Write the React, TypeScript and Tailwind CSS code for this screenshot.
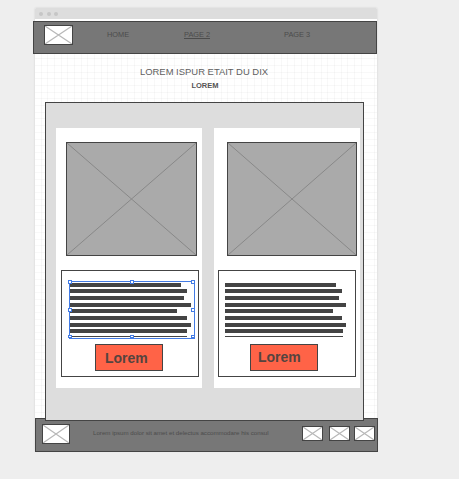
import React from 'react';

function Placeholder({ width, height, className = '', stroke = '#b8b8b8', strokeWidth = 1.2 }: {
  width: number; height: number; className?: string; stroke?: string; strokeWidth?: number;
}) {
  return (
    <div className={`shrink-0 border border-[#444] ${className}`} style={{ width, height }}>
      <svg className="block h-full w-full" viewBox={`0 0 ${width - 2} ${height - 2}`}>
        <path d={`M0 0L${width - 2} ${height - 2}M${width - 2} 0L0 ${height - 2}`} stroke={stroke} strokeWidth={strokeWidth} fill="none" />
      </svg>
    </div>
  );
}

const gaps = [0, 2, 3, 3, 2, 3, 3, 2, 3];

function TextLines({ widths }: { widths: number[] }) {
  return (
    <div className="flex flex-col">
      {widths.map((width, i) => (
        <div key={i} className="bg-[#444]" style={{ width, height: i === 8 ? 1 : 4, marginTop: gaps[i] }} />
      ))}
    </div>
  );
}

const handles = [
  [-1, -1, 4], [61, -1, 4], [122, -1, 4],
  [-1, 27, 4], [122, 27, 4],
  [-1, 54, 3], [61, 54, 3], [122, 54, 3],
];

function Selection() {
  return (
    <div className="absolute left-[7px] top-[10px] h-[58px] w-[126px] border border-[#437be4]">
      {handles.map(([x, y, h], i) => (
        <span key={i} className="absolute w-1 border border-[#437be4] bg-white" style={{ left: x - 1, top: y - 1, height: h }} />
      ))}
    </div>
  );
}

function LoremButton({ className }: { className: string }) {
  return (
    <div className={`h-[27px] w-[68px] border border-[#444] bg-[#ff6347] text-[14px] font-bold leading-[26px] text-[#55443f] ${className}`}>
      Lorem
    </div>
  );
}

export default function App() {
  return (
    <div className="h-[479px] w-[459px] overflow-hidden bg-[#eee] pl-[35px] pt-2 font-['Liberation_Sans',Arial,sans-serif] text-[#444]">
      <div className="h-[443px] w-[342px] bg-white shadow-[0_0_2px_rgba(0,0,0,0.12)] bg-[repeating-linear-gradient(90deg,transparent_0px,transparent_5.67px,rgba(0,0,0,0.028)_5.67px,rgba(0,0,0,0.028)_6.67px),repeating-linear-gradient(0deg,transparent_0px,transparent_5.67px,rgba(0,0,0,0.028)_5.67px,rgba(0,0,0,0.028)_6.67px)] [background-position:0_1px]">
        <div className="flex h-[11px] items-center gap-[3.5px] rounded-t-[1px] bg-[#ddd] pl-1">
          <span className="h-1 w-1 rounded-full bg-[#c6c6c6]" />
          <span className="h-1 w-1 rounded-full bg-[#c6c6c6]" />
          <span className="h-1 w-1 rounded-full bg-[#c6c6c6]" />
        </div>
        <div className="h-0.5 bg-white" />
        <header className="-ml-0.5 flex h-[33px] w-[344px] border border-[#444] bg-[#777] pl-2.5 pt-[3px] text-[7.4px] leading-[9px] text-[#4c4c4c]">
          <Placeholder width={29} height={20} className="bg-white" />
          <nav className="flex pl-[34px] pt-[5px]">
            <span className="w-[77px]">HOME</span>
            <span className="w-[100px]"><span className="inline-block h-[9px] border-b border-[#4c4c4c]">PAGE 2</span></span>
            <span>PAGE 3</span>
          </nav>
        </header>
        <section className="h-12 pt-[12px] text-center">
          <h1 className="pr-1 text-[9.45px] leading-[12px] text-[#606060]">LOREM ISPUR ETAIT DU DIX</h1>
          <h2 className="mt-[3px] pr-0.5 text-[7.5px] font-bold leading-[9px] text-[#555]">LOREM</h2>
        </section>
        <main className="relative z-10 ml-2.5 flex h-[319px] w-[319px] gap-3 border border-[#444] bg-[#ddd] pl-2.5 pt-[25px]">
          <article className="h-[260px] w-[146px] bg-white pl-[5px] pt-[14px]">
            <Placeholder width={131} height={114} className="ml-[5px] bg-[#aaa]" stroke="#888" strokeWidth={1} />
            <div className="relative mt-[14px] h-[107px] w-[138px] border border-[#444] pl-2 pt-3">
              <TextLines widths={[111, 117, 114, 121, 107, 117, 121, 117, 117]} />
              <Selection />
              <LoremButton className="ml-[25px] mt-[7px] pl-[9px]" />
            </div>
          </article>
          <article className="h-[260px] w-[146px] bg-white pl-1 pt-[14px]">
            <Placeholder width={130} height={114} className="ml-[9px] bg-[#aaa]" stroke="#888" strokeWidth={1} />
            <div className="mt-[14px] h-[107px] w-[138px] border border-[#444] pl-1.5 pt-3">
              <TextLines widths={[111, 117, 114, 121, 108, 117, 121, 118, 118]} />
              <LoremButton className="ml-[25px] mt-[7px] pl-[7px] !leading-[24px]" />
            </div>
          </article>
        </main>
        <footer className="-mt-[3px] flex h-[34px] w-[343px] border border-[#444] bg-[#777] pl-1.5 pt-[5px]">
          <Placeholder width={28} height={20} className="bg-white" />
          <p className="w-[232px] whitespace-nowrap pl-[23px] pt-[5px] text-[6.17px] leading-[8px] text-[#4c4c4c]">Lorem ipsum dolor sit amet et delectus accommodare his consul</p>
          <div className="flex pt-0.5">
            <Placeholder width={21} height={15} className="bg-white" />
            <Placeholder width={21} height={15} className="ml-1.5 bg-white" />
            <Placeholder width={21} height={15} className="ml-1 bg-white" />
          </div>
        </footer>
      </div>
    </div>
  );
}
